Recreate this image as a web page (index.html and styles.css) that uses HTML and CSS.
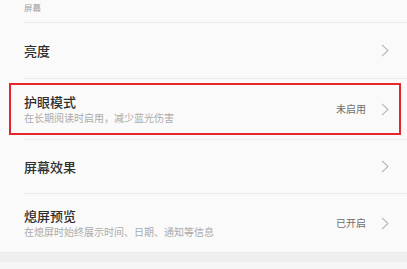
FILE: index.html
```html
<!DOCTYPE html>
<html lang="zh-CN">
<head>
<meta charset="utf-8">
<link rel="stylesheet" href="styles.css">
</head>
<body>
<div class="page">
  <div class="list">
    <div class="header">屏幕</div>
    <div class="item item-single">
      <div class="text"><div class="title">亮度</div></div>
      <svg class="chev" viewBox="0 0 8 13" width="8" height="13"><polyline points="1,0.8 7,6.5 1,12.2" fill="none" stroke="#b5b5b5" stroke-width="1.1"/></svg>
    </div>
    <div class="item item-double highlight">
      <div class="text">
        <div class="title">护眼模式</div>
        <div class="sub">在长期阅读时启用，减少蓝光伤害</div>
      </div>
      <div class="value">未启用</div>
      <svg class="chev" viewBox="0 0 8 13" width="8" height="13"><polyline points="1,0.8 7,6.5 1,12.2" fill="none" stroke="#b5b5b5" stroke-width="1.1"/></svg>
    </div>
    <div class="item item-single short">
      <div class="text"><div class="title">屏幕效果</div></div>
      <svg class="chev" viewBox="0 0 8 13" width="8" height="13"><polyline points="1,0.8 7,6.5 1,12.2" fill="none" stroke="#b5b5b5" stroke-width="1.1"/></svg>
    </div>
    <div class="item item-double last">
      <div class="text">
        <div class="title">熄屏预览</div>
        <div class="sub">在熄屏时始终展示时间、日期、通知等信息</div>
      </div>
      <div class="value">已开启</div>
      <svg class="chev" viewBox="0 0 8 13" width="8" height="13"><polyline points="1,0.8 7,6.5 1,12.2" fill="none" stroke="#b5b5b5" stroke-width="1.1"/></svg>
    </div>
  </div>
  <div class="band"></div>
</div>
</body>
</html>
```

FILE: styles.css
```css
html, body {
  margin: 0;
  padding: 0;
}
body {
  width: 407px;
  height: 269px;
  overflow: hidden;
  background: #f6f6f6;
  font-family: "Noto Sans CJK SC", "Noto Sans", sans-serif;
}
.page {
  display: flex;
  flex-direction: column;
}
.list {
  background: #fafafa;
  padding-left: 24px;
}
.header {
  height: 23px;
  box-sizing: border-box;
  padding-top: 1px;
  font-size: 8.5px;
  line-height: 12px;
  color: #a0a0a0;
  border-bottom: 1px solid #ebebeb;
}
.item {
  display: flex;
  align-items: center;
  padding-right: 18px;
  border-bottom: 1px solid #ebebeb;
  position: relative;
}
.item-single {
  height: 55px;
}
.item-single.short {
  height: 53px;
}
.item-double {
  height: 60px;
}
.item.last {
  height: 58px;
  border-bottom: none;
}
.text {
  flex: 1;
  display: flex;
  flex-direction: column;
}
.title {
  font-size: 13px;
  line-height: 14px;
  font-weight: 500;
  color: #2e2e2e;
}
.sub {
  margin-top: 3px;
  font-size: 10px;
  line-height: 12px;
  color: #ababab;
}
.value {
  font-size: 10px;
  line-height: 12px;
  color: #6e6e6e;
  margin-right: 15px;
}
.chev {
  display: block;
  flex: none;
}
.highlight::after {
  content: "";
  position: absolute;
  left: -15px;
  right: 6px;
  top: 4px;
  bottom: 4px;
  border: 2px solid #e5262b;
}
.band {
  height: 9px;
  background: #efefef;
  border-top: 1px solid #e8e8e8;
}
```
